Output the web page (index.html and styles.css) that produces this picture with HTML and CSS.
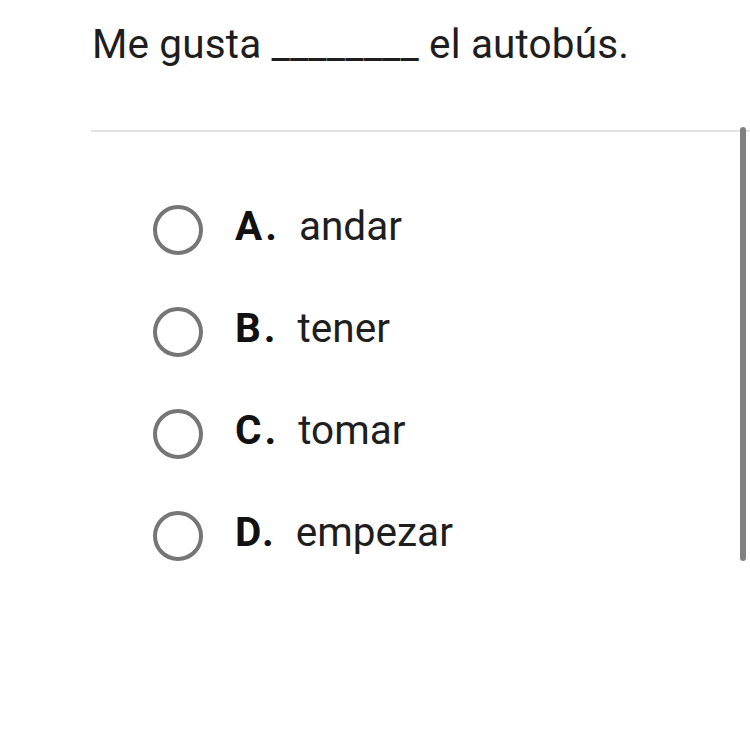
FILE: index.html
```html
<!DOCTYPE html>
<html lang="es">
<head>
<meta charset="utf-8">
<link rel="stylesheet" href="styles.css">
</head>
<body>
<div class="page">
  <div class="question">Me gusta ________ el autobús.</div>
  <div class="divider"></div>
  <div class="body">
    <ul class="options">
      <li class="option"><span class="radio"></span><span class="letter">A.</span><span class="answer">andar</span></li>
      <li class="option"><span class="radio"></span><span class="letter">B.</span><span class="answer">tener</span></li>
      <li class="option"><span class="radio"></span><span class="letter">C.</span><span class="answer">tomar</span></li>
      <li class="option"><span class="radio"></span><span class="letter">D.</span><span class="answer">empezar</span></li>
    </ul>
    <div class="scrollbar"></div>
  </div>
</div>
</body>
</html>
```

FILE: styles.css
```css
html, body {
  margin: 0;
  padding: 0;
  background: #ffffff;
}
body {
  font-family: Roboto, "Noto Sans", sans-serif;
  color: #1f1f1f;
  width: 750px;
  height: 751px;
  overflow: hidden;
}
.page {
  padding-left: 91px;
}
.question {
  font-size: 40.5px;
  letter-spacing: 0.15px;
  line-height: 46px;
  padding-top: 21px;
  padding-left: 1px;
  height: 108px;
  box-sizing: border-box;
  color: #1e1e1e;
  white-space: nowrap;
}
.divider {
  height: 2px;
  background: #e2e2e2;
  margin-top: 22px;
}
.body {
  position: relative;
}
.scrollbar {
  position: absolute;
  right: 4px;
  top: -5px;
  width: 6px;
  height: 434px;
  border-radius: 3px;
  background: #808080;
}
.options {
  list-style: none;
  margin: 0;
  padding: 73px 0 0 62px;
  display: flex;
  flex-direction: column;
  gap: 52px;
}
.option {
  display: flex;
  align-items: center;
  height: 50px;
}
.radio {
  width: 50px;
  height: 50px;
  box-sizing: border-box;
  border: 4px solid #767676;
  border-radius: 50%;
  flex: none;
}
.letter {
  font-weight: 700;
  font-size: 40.5px;
  letter-spacing: 3px;
  margin-left: 32px;
  margin-right: 19px;
  padding-bottom: 8px;
  color: #111;
}
.answer {
  font-size: 40.5px;
  padding-bottom: 8px;
  color: #1e1e1e;
}
```
